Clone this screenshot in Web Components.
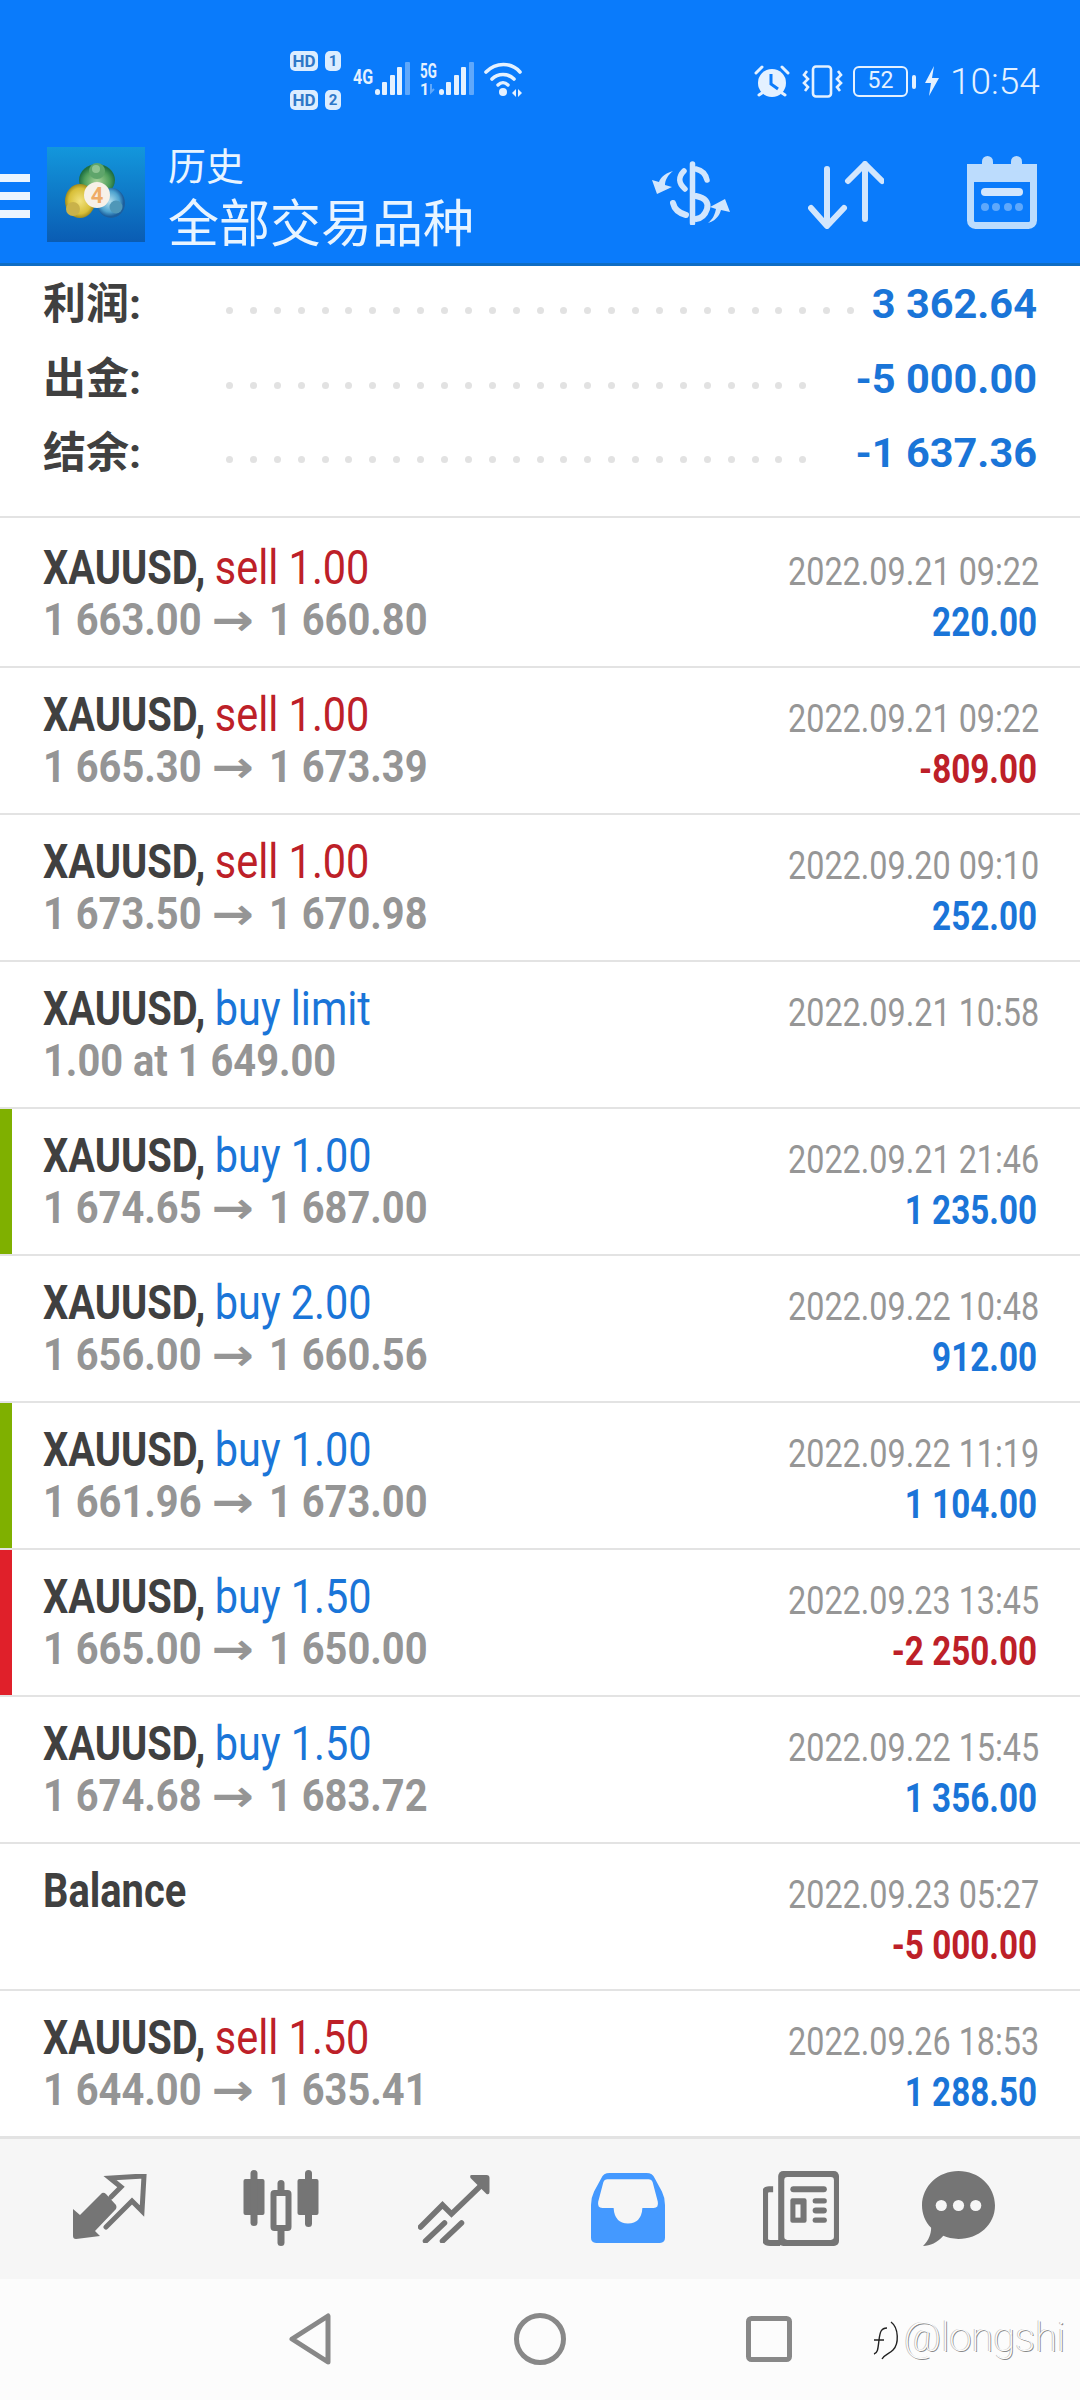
<!DOCTYPE html>
<html><head><meta charset="utf-8">
<style>
html,body{margin:0;padding:0;background:#fff}
body{width:1080px;height:2400px;overflow:hidden;display:flex;flex-direction:column;font-family:Roboto,"Noto Sans CJK SC",sans-serif}
</style></head><body>
<status-bar></status-bar>
<app-header><span slot="kicker">历史</span><span slot="title">全部交易品种</span></app-header>
<summary-panel>
<summary-row dots="26"><span slot="label">利润:</span><span slot="value">3 362.64</span></summary-row>
<summary-row dots="24"><span slot="label">出金:</span><span slot="value">-5 000.00</span></summary-row>
<summary-row dots="24"><span slot="label">结余:</span><span slot="value">-1 637.36</span></summary-row>
</summary-panel>
<trade-list></trade-list>
<tab-bar></tab-bar>
<nav-bar></nav-bar>
<script>
function def(name,html,init){
  customElements.define(name,class extends HTMLElement{
    constructor(){super();this.attachShadow({mode:'open'}).innerHTML=html;}
    connectedCallback(){if(init)init(this);}
  });
}
def('status-bar',`<style>
:host{display:flex;height:130px;background:#0a7bfb;color:#e4f1ff;box-sizing:border-box;padding:51px 43px 0 290px;align-items:flex-start}
.hd{display:flex;flex-direction:column;gap:19px;width:51px;flex:none}
.hd div{display:flex;gap:7px}
.hd b{display:block;height:20px;background:#dcedff;color:#2f78c8;border-radius:5px;font:700 17px/20px Roboto,sans-serif;text-align:center}
.hd b:first-child{width:28px}.hd b:last-child{width:16px;font-size:15px}
.sig{flex:none;margin-top:11px}
.rt{margin-left:auto;display:flex;align-items:flex-start;margin-top:14px}
svg{display:block}
.time{font:300 37px/34px Roboto,sans-serif;width:87px;text-align:right;margin-left:10px;white-space:nowrap}
.batt{position:relative;width:64px;height:33px;margin-left:10px;flex:none}
.batt span{position:absolute;left:0;top:1px;width:55px;height:31px;border:2.5px solid #e4f1ff;box-sizing:border-box;border-radius:6px;font:400 23px/26px Roboto,sans-serif;text-align:center}
.batt i{position:absolute;left:59px;top:10px;width:4px;height:14px;background:#e4f1ff;border-radius:2px}
</style>
<div class="hd"><div><b>HD</b><b>1</b></div><div><b>HD</b><b>2</b></div></div>
<svg class="sig" width="70" height="36" viewBox="0 0 70 36" style="margin-left:12px;font:700 20px Roboto">
<text transform="translate(0,22) scale(.8,1)" fill="#e4f1ff">4G</text>
<g fill="#e4f1ff"><rect x="22" y="27" width="5" height="6" rx="2.5"/><rect x="29" y="20" width="5" height="13" rx="1"/><rect x="37" y="13" width="5" height="20" rx="1"/><rect x="44" y="5" width="5" height="28" rx="1"/></g>
<rect x="52" y="0" width="5" height="33" rx="1" fill="#5fa8fb"/></svg>
<svg class="sig" width="70" height="44" viewBox="0 -8 70 44" style="margin-left:-3px;margin-top:3px;font:700 20px Roboto">
<text transform="translate(0,16) scale(.67,1)" fill="#e4f1ff">5G</text>
<text x="0" y="33" fill="#e4f1ff" font-size="16">1</text><path d="M11 22v8l3-3" stroke="#5fa8fb" stroke-width="2" fill="none"/>
<g fill="#e4f1ff"><rect x="19" y="27" width="5" height="6" rx="2.5"/><rect x="26" y="20" width="5" height="13" rx="1"/><rect x="34" y="13" width="5" height="20" rx="1"/><rect x="41" y="5" width="5" height="28" rx="1"/></g>
<rect x="49" y="0" width="5" height="33" rx="1" fill="#5fa8fb"/></svg>
<svg class="sig" width="42" height="36" viewBox="0 0 42 36" style="margin-left:-6px">
<g fill="none" stroke="#e4f1ff" stroke-width="3.6" stroke-linecap="round"><path d="M2 10C12 0 27 0 36 10"/><path d="M8 17C14 11 24 11 30 17"/></g>
<circle cx="19" cy="30" r="4" fill="#e4f1ff"/>
<path d="M32 27l-4 4 4 4zM34 27l4 4-4 4z" fill="#e4f1ff"/><path d="M14 23c3-3 7-3 10 0" stroke="#e4f1ff" stroke-width="3.4" fill="none" stroke-linecap="round"/></svg>
<div class="rt">
<svg width="36" height="33" viewBox="0 0 36 33"><circle cx="18" cy="18" r="14" fill="#e4f1ff"/><path d="M17 9v10l7 5" fill="none" stroke="#0a7bfb" stroke-width="3"/><path d="M2 8l6-6M34 8l-6-6M5 30l3-2M31 30l-3-2" stroke="#e4f1ff" stroke-width="3" stroke-linecap="round"/></svg>
<svg width="41" height="33" viewBox="0 0 41 33" style="margin-left:12px"><rect x="11" y="1.5" width="18" height="30" rx="3" fill="none" stroke="#e4f1ff" stroke-width="2.6"/><path d="M5 6l-3 4 4 4-4 4 4 4-3 4M36 6l3 4-4 4 4 4-4 4 3 4" fill="none" stroke="#e4f1ff" stroke-width="2.6"/></svg>
<div class="batt"><span>52</span><i></i></div>
<svg width="16" height="32" viewBox="0 0 16 32" style="margin-left:7px"><path d="M10 1L1 18h6l-2 13 10-18H8z" fill="#e4f1ff"/></svg>
<div class="time">10:54</div>
</div>`);

def('app-header',`<style>
:host{display:flex;height:136px;background:#0a7bfb;border-bottom:3px solid #0f6dc4;box-sizing:border-box;color:#e8f4ff;align-items:flex-start;position:relative}
.burger{width:30px;margin-top:44px;flex:none;display:flex;flex-direction:column;gap:10px}
.burger i{display:block;height:8px;background:#eaf5ff}
.logo{margin:17px 0 0 17px;flex:none;display:block}
.txt{margin-left:23px;display:flex;flex-direction:column;flex:none;width:320px}
.k{font:400 38px/44px Roboto,"Noto Sans CJK SC",sans-serif;margin-top:14.5px}
.t{font:400 51px/58px Roboto,"Noto Sans CJK SC",sans-serif;margin-top:7px;white-space:nowrap}
.ic{margin-left:auto;display:flex;align-items:flex-start;padding-right:43px}
svg{display:block}
</style>
<div class="burger"><i></i><i></i><i></i></div>
<svg class="logo" width="98" height="95" viewBox="0 0 98 95">
<defs><linearGradient id="g" x1="0" y1="0" x2="0" y2="1"><stop offset="0" stop-color="#1397dc"/><stop offset="1" stop-color="#0a5cb3"/></linearGradient>
<radialGradient id="gr" cx=".5" cy=".55"><stop offset="0" stop-color="#a9d39a"/><stop offset=".7" stop-color="#4f9f5c"/><stop offset="1" stop-color="#1f6f42"/></radialGradient>
<radialGradient id="ye" cx=".5" cy=".5"><stop offset="0" stop-color="#f2e27c"/><stop offset=".75" stop-color="#d8bf38"/><stop offset="1" stop-color="#9e8a1e"/></radialGradient>
<radialGradient id="bl" cx=".45" cy=".45"><stop offset="0" stop-color="#b6e0ee"/><stop offset=".7" stop-color="#4ea3cf"/><stop offset="1" stop-color="#1c5f9e"/></radialGradient></defs>
<rect width="98" height="95" fill="url(#g)"/>
<ellipse cx="50" cy="33" rx="18" ry="16" fill="url(#gr)"/><circle cx="50" cy="24" r="8" fill="#5fa56b"/><circle cx="49" cy="22" r="4" fill="#8fc492"/>
<ellipse cx="33" cy="54" rx="15" ry="17" fill="url(#ye)"/><circle cx="26" cy="62" r="7" fill="#c9b24a"/>
<ellipse cx="64" cy="56" rx="14" ry="15" fill="url(#bl)"/><circle cx="69" cy="60" r="6.5" fill="#4f97b8"/>
<circle cx="50" cy="48" r="13" fill="#f7f1e8"/>
<text x="50" y="56" text-anchor="middle" font-family="Roboto" font-weight="700" font-size="22" fill="#efac66">4</text></svg>
<div class="txt"><div class="k"><slot name="kicker"></slot></div><div class="t"><slot name="title"></slot></div></div>
<div class="ic">
<svg width="80" height="64" viewBox="0 0 80 64" style="margin-top:31px">
<g fill="none" stroke="#d2e6fd" stroke-linecap="round"><path d="M42.5 3V62" stroke-width="5.5"/><path d="M34 10Q25 19 35 28M46 8Q55 10 57 19" stroke-width="5.5"/><path d="M23 42Q25 51 36 54" stroke-width="6"/><path d="M46 35Q60 38 57 48Q54 57 46 58" stroke-width="6"/></g>
<g fill="#d2e6fd"><path d="M23 10C13 13 10 18 9 21L2 19 7 33 22 26 15 24C15 19 18 14 23 10Z"/><path d="M58 62C68 59 70 52 71 49L80 51 75 38 60 46 66 48C65 53 63 58 58 62Z"/></g></svg>
<svg width="76" height="68" viewBox="0 0 76 68" style="margin-top:31px;margin-left:78px"><g fill="none" stroke="#d2e6fd" stroke-width="6" stroke-linecap="round" stroke-linejoin="round"><path d="M19 8V64M3 47L19 65 36 47"/><path d="M57 3V58M40 20L57 3 74 20"/></g></svg>
<svg width="70" height="73" viewBox="0 0 70 73" style="margin-top:26px;margin-left:83px">
<rect x="3.5" y="13.5" width="63" height="56" rx="5" fill="none" stroke="#bcdcfd" stroke-width="7"/><path d="M0 17h70" stroke="#bcdcfd" stroke-width="18"/>
<rect x="8" y="26" width="54" height="38" rx="5" fill="#0a7bfb"/><rect x="14" y="32" width="42" height="8" rx="4" fill="#d2e6fd"/>
<g fill="#5fa8fb"><circle cx="18" cy="51" r="4"/><circle cx="29" cy="51" r="4"/><circle cx="41" cy="51" r="4"/><circle cx="52" cy="51" r="4"/></g>
<rect x="15" y="0" width="11" height="16" rx="5.5" fill="#bcdcfd"/><rect x="44" y="0" width="11" height="16" rx="5.5" fill="#bcdcfd"/></svg>
</div>`);

def('summary-panel',`<style>:host{display:block;height:250px;padding-top:3px;box-sizing:border-box;background:#fff}</style><slot></slot>`);
def('summary-row',`<style>
:host{display:flex;height:74.5px;padding:0 43px;align-items:flex-start}
.l{width:183px;flex:none;font:700 43px/70px Roboto,"Noto Sans CJK SC",sans-serif;color:#404040}
.d{display:flex;gap:16.9px;margin-top:38px;flex:none}
.d i{display:block;width:7px;height:7px;border-radius:50%;background:#e2e2e2}
.v{margin-left:auto;font:700 41.5px/70px Roboto,sans-serif;color:#1a75d8;white-space:nowrap}
</style><div class="l"><slot name="label"></slot></div><div class="d"></div><div class="v"><slot name="value"></slot></div>`,
(el)=>{const d=el.shadowRoot.querySelector('.d');d.innerHTML='<i></i>'.repeat(+el.getAttribute('dots')+1)});

def('trade-row',`<style>
:host{display:flex;height:147px;box-sizing:border-box;border-top:2px solid #e3e3e3;background:#fff;padding:0 43px 0 43px;position:relative}
:host([first]){height:150px;padding-top:3px}
.mark{display:none;position:absolute;left:0;top:0;bottom:0;width:12px}
:host([mark=green]) .mark{display:block;background:#7fb000}
:host([mark=red]) .mark{display:block;background:#e0202a}
.c{display:block;white-space:nowrap;transform:scaleX(.83);transform-origin:left}
.lft{flex:1;padding-top:21.5px}
.rgt{width:300px;padding-top:25.5px}
.rgt .c{transform-origin:right;text-align:right}
.t{font:400 48px/50px Roboto,sans-serif;color:#1a75d8}
:host([side=sell]) .t{color:#bd2028}
.sym{font-weight:700;color:#404040}
.a{display:inline-block;transform:scaleX(1.04);transform-origin:left}
.p{font:700 45px/50px Roboto,sans-serif;color:#959595;transform:scaleX(.885);margin-top:2px}
.time{font:400 39px/50px Roboto,sans-serif;color:#969696}
.pf{font:700 40px/50px Roboto,sans-serif;color:#1a75d8;margin-top:1px}
:host([loss]) .pf{color:#bd2028}
</style><div class="mark"></div>
<div class="lft"><div class="c t"><span class="sym"><slot name="sym"></slot></span> <span class="a"><slot name="act"></slot></span></div><div class="c p"><slot name="pr"></slot></div></div>
<div class="rgt"><div class="c time"><slot name="time"></slot></div><div class="c pf"><slot name="pf"></slot></div></div>`);

def('trade-list',`<style>:host{display:block;flex:none}</style><slot></slot>`,(el)=>{
  if(el.childElementCount)return;
  const D=[
  ['XAUUSD,','sell 1.00','1 663.00 → 1 660.80','2022.09.21 09:22','220.00','',''],
  ['XAUUSD,','sell 1.00','1 665.30 → 1 673.39','2022.09.21 09:22','-809.00','',''],
  ['XAUUSD,','sell 1.00','1 673.50 → 1 670.98','2022.09.20 09:10','252.00','',''],
  ['XAUUSD,','buy limit','1.00 at 1 649.00','2022.09.21 10:58','','',''],
  ['XAUUSD,','buy 1.00','1 674.65 → 1 687.00','2022.09.21 21:46','1 235.00','green'],
  ['XAUUSD,','buy 2.00','1 656.00 → 1 660.56','2022.09.22 10:48','912.00',''],
  ['XAUUSD,','buy 1.00','1 661.96 → 1 673.00','2022.09.22 11:19','1 104.00','green'],
  ['XAUUSD,','buy 1.50','1 665.00 → 1 650.00','2022.09.23 13:45','-2 250.00','red'],
  ['XAUUSD,','buy 1.50','1 674.68 → 1 683.72','2022.09.22 15:45','1 356.00',''],
  ['Balance','','','2022.09.23 05:27','-5 000.00',''],
  ['XAUUSD,','sell 1.50','1 644.00 → 1 635.41','2022.09.26 18:53','1 288.50','']];
  D.forEach((r,i)=>{
    const t=document.createElement('trade-row');
    if(i==0)t.setAttribute('first','');
    if(r[1].startsWith('sell'))t.setAttribute('side','sell');
    if(r[4].startsWith('-'))t.setAttribute('loss','');
    if(r[5])t.setAttribute('mark',r[5]);
    ['sym','act','pr','time','pf'].forEach((s,j)=>{
      if(!r[j])return;
      const e=document.createElement('span');e.slot=s;
      if(s==='pr'&&r[j].includes('→')){
        const [a,b]=r[j].split('→');
        const ar=document.createElement('span');ar.textContent='→';
        ar.style.cssText="display:inline-block;font:700 44px/40px 'DejaVu Sans',sans-serif;transform:scaleX(1.3);transform-origin:left;margin-right:17px";
        e.append(a,ar,b);
      } else e.textContent=r[j];
      t.appendChild(e)});
    el.appendChild(t);
  });
});

def('tab-bar',`<style>
:host{display:flex;height:143px;box-sizing:border-box;flex:none;border-top:3px solid #e3e3e3;background:#f6f6f6;padding:2px 0 0 73px;align-items:flex-start}
svg{display:block;flex:none}
</style>
<svg width="74" height="69" viewBox="0 0 74 69" style="margin-top:33px"><path fill="#757575" d="M0 35L7 41 29 19Q31 18 33 20L43 31Q44 33 43 35L22 57 27 62 3 65Q0 65 0 62Z"/><path fill="none" stroke="#757575" stroke-width="5" stroke-linecap="round" stroke-linejoin="miter" d="M38 23L48 13 37 4 71 2 69 37 59 27 33 53"/></svg>
<svg width="76" height="76" viewBox="0 0 75 76" style="margin-top:29px;margin-left:96px"><g fill="#757575"><rect x="0" y="9" width="21" height="36" rx="2"/><rect x="7" y="0" width="7" height="56" rx="3.5"/><rect x="54" y="9" width="21" height="36" rx="2"/><rect x="61.5" y="0" width="7" height="57" rx="3.5"/><rect x="34" y="10" width="7" height="66" rx="3.5"/></g><rect x="30" y="23" width="15" height="35" rx="1" fill="#f6f6f6" stroke="#757575" stroke-width="6"/></svg>
<svg width="72" height="68" viewBox="0 0 71 68" style="margin-top:34px;margin-left:99px"><g fill="none" stroke="#757575" stroke-width="5.5" stroke-linecap="round" stroke-linejoin="miter"><path d="M2 52L24 30 33 39 62 11"/><path d="M7 66L26 48M24 66L43 48"/></g><path fill="#757575" d="M53 0H68Q71 0 71 3V17Q71 20 68 19L52 3Q51 0 53 0Z"/></svg>
<svg width="74" height="70" viewBox="0 0 72 68" style="margin-top:32px;margin-left:101px"><path fill="#4499ff" fill-rule="evenodd" d="M0 31Q0 24 3 18L10 5Q12 0 18 0H54Q60 0 62 5L69 18Q72 24 72 31V63Q72 68 67 68H5Q0 68 0 63ZM16 6Q13 6 12 9L7 28Q6 34 11 34H22Q23 49 36 49 49 49 50 34H61Q66 34 65 28L60 9Q59 6 56 6Z"/></svg>
<svg width="76" height="75" viewBox="0 0 75 74" style="margin-top:30px;margin-left:98px"><rect x="15" y="0" width="60" height="74" rx="5" fill="#757575"/><rect x="21" y="6" width="49" height="62" rx="3" fill="#f6f6f6"/><path d="M10 18H6Q2 18 2 22V67Q2 71 7 71H17" fill="none" stroke="#757575" stroke-width="6"/><g fill="#757575"><rect x="27" y="15" width="36" height="6" rx="3"/><rect x="27" y="27" width="16" height="24" rx="2"/><rect x="49" y="27" width="14" height="5" rx="2.5"/><rect x="49" y="36" width="14" height="6" rx="3"/><rect x="49" y="46" width="14" height="5" rx="2.5"/></g><rect x="32" y="33" width="5" height="13" fill="#f6f6f6"/></svg>
<svg width="73" height="75" viewBox="0 0 72 74" style="margin-top:30px;margin-left:83px"><path fill="#757575" d="M36 0C56 0 72 15 72 34S56 67 36 67C30 67 25 66 21 64 15 71 8 74 1 74 7 68 9 62 9 56 3 50 0 42 0 34 0 15 16 0 36 0Z"/><g fill="#f6f6f6"><circle cx="19" cy="34" r="5.5"/><circle cx="36" cy="34" r="5.5"/><circle cx="53" cy="34" r="5.5"/></g></svg>`);

def('nav-bar',`<style>
:host{display:flex;flex:1;background:#fcfcfc;padding:34px 0 0 288px;box-sizing:border-box;align-items:flex-start;position:relative}
svg{display:block;flex:none}
.w{position:absolute;left:871px;top:35px;display:flex;align-items:center;gap:3px}
.w span{font:100 40px/48px Roboto,sans-serif;color:#fff;text-shadow:1px 1px 0 #8a8a8a,-1px 0 0 #c4c4c4;white-space:nowrap}
</style>
<svg width="44" height="52" viewBox="0 0 44 52"><path d="M40 3V49L4 26Z" fill="none" stroke="#888" stroke-width="5" stroke-linejoin="round"/></svg>
<svg width="52" height="52" viewBox="0 0 52 52" style="margin-left:182px"><circle cx="26" cy="26" r="23.5" fill="none" stroke="#888" stroke-width="5"/></svg>
<svg width="46" height="46" viewBox="0 0 46 46" style="margin-left:180px;margin-top:3px"><rect x="2.5" y="2.5" width="41" height="41" rx="3" fill="none" stroke="#888" stroke-width="5"/></svg>
<div class="w"><svg width="30" height="44" viewBox="0 0 30 44"><path d="M3 24H13M16 12C10 12 9 16 8 24 7 32 7 37 3 38M20 6C28 12 28 28 22 34 18 38 14 38 11 43" fill="none" stroke="#222" stroke-width="1.4"/></svg><span>@longshi</span></div>`);
</script>
</body></html>
